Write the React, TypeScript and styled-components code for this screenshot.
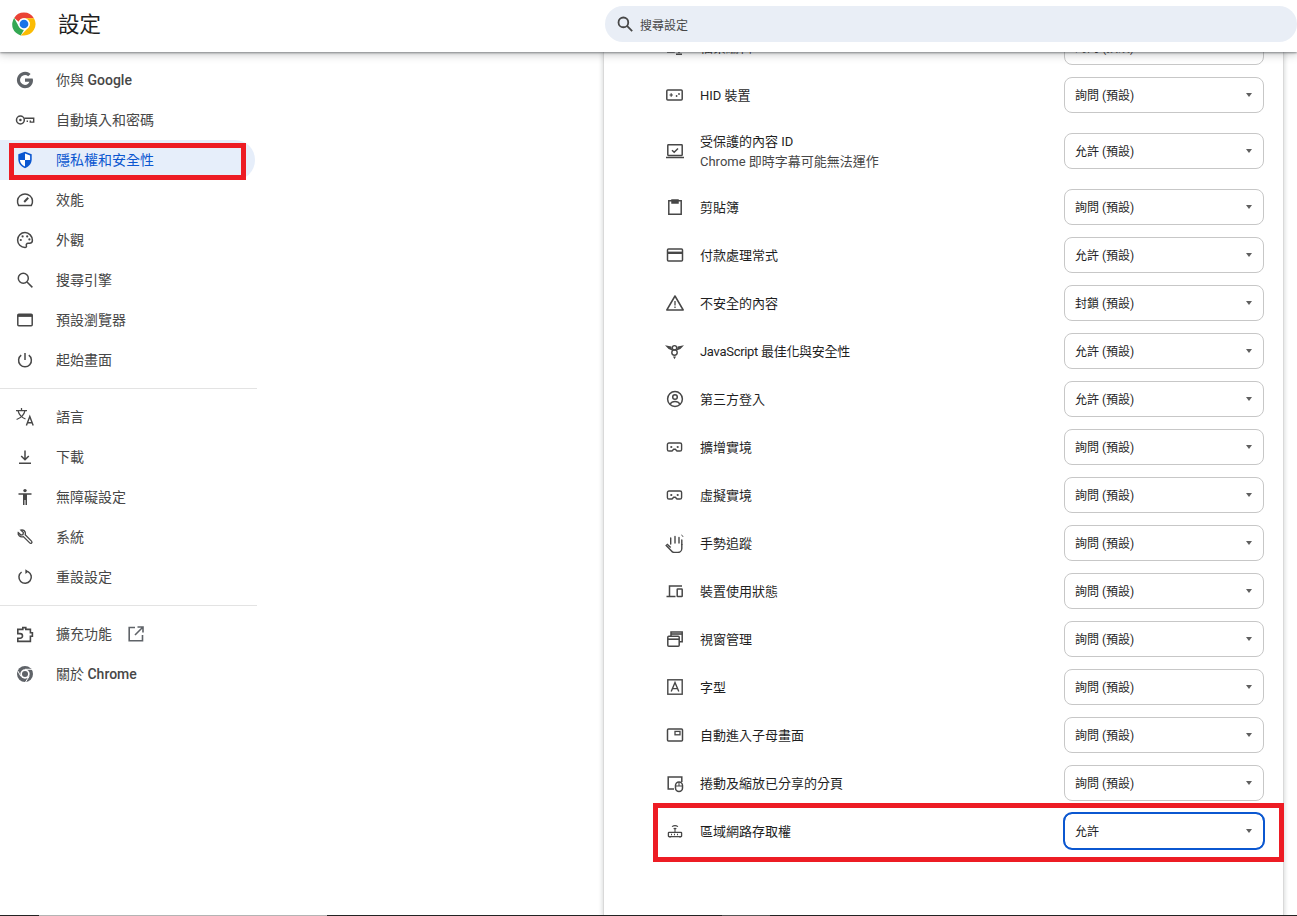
import React from "react";
import styled, { createGlobalStyle } from "styled-components";

const Global = createGlobalStyle`
  html, body { margin: 0; padding: 0; height: 100%; background: #fff; overflow: hidden; }
  * { box-sizing: border-box; }
  body { font-family: Roboto, "Noto Sans CJK TC", "Liberation Sans", sans-serif; font-size: 13px; color: #1f1f1f; }
`;

const Page = styled.div`
  position: relative;
  width: 1297px;
  height: 916px;
  display: flex;
  flex-direction: column;
  overflow: hidden;
`;

const Header = styled.header`
  flex: 0 0 52px;
  display: flex;
  align-items: center;
  padding-bottom: 4px;
  background: #fff;
  box-shadow: 0 1px 2px rgba(60, 64, 67, 0.55), 0 3px 8px rgba(60, 64, 67, 0.25);
  position: relative;
  z-index: 2;
`;

const Brand = styled.div`
  flex: 0 0 605px;
  display: flex;
  align-items: center;
  padding-left: 12px;
  gap: 22px;
`;

const Title = styled.h1`
  margin: 2px 0 0 0;
  font-size: 21.5px;
  font-weight: 400;
  line-height: 1;
  color: #1f1f1f;
`;

const SearchBox = styled.div`
  flex: 0 0 692px;
  height: 36px;
  border-radius: 18px;
  background: #e9eef6;
  display: flex;
  align-items: center;
  padding-left: 11px;
  gap: 6px;
  font-size: 12px;
  color: #474747;
`;

const Body = styled.div`
  flex: 1;
  min-height: 0;
  display: flex;
`;

const Sidebar = styled.nav`
  flex: 0 0 257px;
  padding-top: 8px;
`;

const NavRow = styled.div<{ $active?: boolean }>`
  width: 255px;
  height: 40px;
  display: flex;
  align-items: center;
  padding-left: 15px;
  border-radius: 0 20px 20px 0;
  color: ${(p) => (p.$active ? "#0b57d0" : "#474747")};
  background: ${(p) => (p.$active ? "#e6eefa" : "transparent")};
`;

const NavIcon = styled.span`
  flex: 0 0 20px;
  height: 20px;
  margin-right: 21px;
  display: flex;
`;

const NavText = styled.span`
  display: block;
  font-size: 14px;
  line-height: 20px;
  white-space: pre;
`;

const Latin = styled.span`
  font-weight: 500;
`;

const Divider = styled.hr`
  width: 257px;
  height: 1px;
  margin: 8px 0 8px;
  border: 0;
  background: #e3e3e3;
`;

const Gutter = styled.div`
  flex: 0 0 346px;
`;

const Card = styled.main`
  flex: 0 0 681px;
  background: #fff;
  border-left: 1px solid #d9d9d9;
  border-right: 1px solid #d9d9d9;
  box-shadow: -2px 0 3px rgba(60, 64, 67, 0.12), 2px 0 3px rgba(60, 64, 67, 0.12);
  overflow: hidden;
`;

const List = styled.div`
  margin-top: -29px;
  padding: 0 19px 0 61px;
`;

const Row = styled.div<{ $tall?: boolean }>`
  height: ${(p) => (p.$tall ? 64 : 48)}px;
  display: flex;
  align-items: center;
`;

const RowIcon = styled.span`
  flex: 0 0 20px;
  height: 20px;
  margin-right: 15px;
  display: flex;
  color: #474747;
`;

const RowLabel = styled.div<{ $tight?: boolean }>`
  flex: 1;
  min-width: 0;
  margin-top: 2px;
  line-height: 20px;
  color: #1f1f1f;
  letter-spacing: ${(p) => (p.$tight ? "-0.3px" : "normal")};
`;

const Sub = styled.div`
  color: #474747;
`;

const Select = styled.div<{ $focused?: boolean }>`
  flex: 0 0 200px;
  height: 36px;
  display: flex;
  align-items: center;
  justify-content: space-between;
  padding: 0 11px 0 10px;
  border: 1px solid #c7c7c7;
  border-radius: 8px;
  font-size: 12px;
  color: #1f1f1f;
  background: #fff;
  ${(p) => p.$focused && "outline: 2px solid #0b57d0; outline-offset: -1px; border-color: #0b57d0;"}
`;

const SelectText = styled.span`
  margin-top: -2px;
`;

const Caret = styled.span`
  width: 0;
  height: 0;
  border-left: 3.5px solid transparent;
  border-right: 3.5px solid transparent;
  border-top: 4px solid #5f5f5f;
`;

const RedBox = styled.div<{ $x: number; $y: number; $w: number; $h: number }>`
  position: absolute;
  left: ${(p) => p.$x}px;
  top: ${(p) => p.$y}px;
  width: ${(p) => p.$w}px;
  height: ${(p) => p.$h}px;
  border: 5px solid #ed1c24;
  z-index: 3;
  pointer-events: none;
`;

const TaskStrip = styled.div`
  position: absolute;
  left: 0;
  right: 0;
  bottom: 0;
  height: 1px;
  background: #232323;
  z-index: 4;
`;

const TaskGap = styled.span<{ $x: number; $w: number; $c: string }>`
  position: absolute;
  left: ${(p) => p.$x}px;
  width: ${(p) => p.$w}px;
  top: 0;
  height: 1px;
  background: ${(p) => p.$c};
`;

type IconProps = { children: React.ReactNode };
const Ico = ({ children }: IconProps) => (
  <svg width="20" height="20" viewBox="0 0 20 20" fill="none" stroke="currentColor" strokeWidth="1.5">
    {children}
  </svg>
);

const ChromeLogo = () => (
  <svg width="24" height="24" viewBox="2 2 44 44">
    <path fill="#ea4335" d="M24 3a21 21 0 0 1 18.2 10.5H24a10.5 10.5 0 0 0-9.7 6.4L6 12.9A21 21 0 0 1 24 3z" />
    <path fill="#34a853" d="M6 12.9l9 16.4A10.5 10.5 0 0 0 24 34.5L18 45A21 21 0 0 1 6 12.9z" />
    <path fill="#fbbc04" d="M42.2 13.5A21 21 0 0 1 24 45h-6l15-15.7A10.5 10.5 0 0 0 24 13.5z" />
    <circle cx="24" cy="24" r="10.5" fill="#fff" />
    <circle cx="24" cy="24" r="8" fill="#1a73e8" />
  </svg>
);

const GIcon = () => (
  <svg width="20" height="20" viewBox="0 0 20 20" fill="#5f6368">
    <path d="M17.6 8.4H10v3.3h4.4c-.6 2-2.3 3.2-4.4 3.2a4.9 4.9 0 1 1 3.2-8.6l2.4-2.4A8.2 8.2 0 1 0 10 18.2c4.7 0 8-3.3 8-8 0-.6-.1-1.2-.4-1.8z" />
  </svg>
);

const icons: Record<string, React.ReactNode> = {
  google: <GIcon />,
  key: (
    <Ico>
      <circle cx="5.4" cy="10" r="3.9" />
      <path d="M9.3 8.3h9.4v3.8h-3.4v-1.6M12.3 12.1v-1.6" strokeWidth="1.4" />
      <circle cx="5.4" cy="10" r="1.3" fill="currentColor" stroke="none" />
    </Ico>
  ),
  shield: (
    <svg width="20" height="20" viewBox="0 0 20 20">
      <path fill="#0b57d0" d="M10 1.8l6.7 2.5v5c0 4.2-2.8 7.6-6.7 8.9-3.9-1.3-6.7-4.7-6.7-8.9v-5z" />
      <path fill="#fff" d="M10 3.5l5.1 1.9v4.5H10zM10 9.9v6.6c-2.7-1.1-4.8-3.4-5.1-6.6z" />
    </svg>
  ),
  gauge: (
    <Ico>
      <path d="M3.7 15.5A7.5 7.5 0 1 1 16.3 15.5z" />
      <path d="M9.2 12l4-4.2" strokeWidth="2" />
    </Ico>
  ),
  palette: (
    <Ico>
      <path d="M10 2.6a7.4 7.4 0 0 0 0 14.8c1.3 0 1.7-.9 1.4-1.7-.5-1.2.2-2.4 1.6-2.4h1.6c1.6 0 2.8-1.1 2.8-3 0-4.2-3.4-7.7-7.4-7.7z" />
      <g fill="currentColor" stroke="none">
        <circle cx="5.8" cy="10" r="1.1" />
        <circle cx="7.6" cy="6.4" r="1.1" />
        <circle cx="12.2" cy="6.4" r="1.1" />
        <circle cx="14.4" cy="9.4" r="1.1" />
      </g>
    </Ico>
  ),
  search: (
    <Ico>
      <circle cx="8.3" cy="8.3" r="5" />
      <path d="M12 12l5.4 5.4" />
    </Ico>
  ),
  browser: (
    <Ico>
      <rect x="2.8" y="4.2" width="14.4" height="11.6" rx="1" />
      <path d="M2.8 5.6h14.4" strokeWidth="2.6" />
    </Ico>
  ),
  power: (
    <Ico>
      <path d="M10 3v7" />
      <path d="M6.2 5.2a6.4 6.4 0 1 0 7.6 0" />
    </Ico>
  ),
  lang: (
    <Ico>
      <path d="M1 3.6h11M6.5 1v2.6M3 3.7c1 4 3.8 7 7.5 8.3M10 3.7c-.9 4-3.8 7.2-8.4 8.8" strokeWidth="1.25" />
      <path d="M11.4 18.6l3.4-9 3.4 9M12.6 15.8h4.6" strokeWidth="1.4" />
    </Ico>
  ),
  download: (
    <Ico>
      <path d="M10 3.5v9M6.2 9l3.8 3.8L13.8 9M4 16.2h12" />
    </Ico>
  ),
  a11y: (
    <svg width="20" height="20" viewBox="0 0 20 20" fill="currentColor">
      <circle cx="10" cy="3.6" r="1.7" />
      <path d="M3.5 6.2h13v1.5H12V18h-1.5v-5h-1v5H8V7.7H3.5z" />
    </svg>
  ),
  wrench: (
    <Ico>
      <path d="M3.2 5.6l2.7 2.5 2-.5.5-2L5.8 3c2.4-.8 4.9 1.2 4.6 3.8l-.2 1 6.3 6.3c.6.6.6 1.4.1 1.9s-1.3.5-1.9-.1l-6.3-6.3-1 .2C5 10.1 2.6 8 3.2 5.6z" strokeWidth="1.3" />
    </Ico>
  ),
  reset: (
    <Ico>
      <path d="M6.6 5A6.2 6.2 0 1 0 13 4.6" />
      <path d="M10.4 2.2L13.6 4.6 10.4 7z" fill="currentColor" stroke="none" />
    </Ico>
  ),
  puzzle: (
    <Ico>
      <path d="M2.8 5.4h5V3.6h3v1.8h4.6v3.4h2v3.4h-2v5.2H2.8v-3.2h2.4a2.3 2.3 0 0 0 0-4.6H2.8z" strokeWidth="1.6" />
    </Ico>
  ),
  chrome: (
    <svg width="20" height="20" viewBox="0 0 20 20" fill="#5f6368">
      <circle cx="10" cy="10" r="8" />
      <circle cx="10" cy="10" r="4.7" fill="#fff" />
      <circle cx="10" cy="10" r="3" />
      <path fill="none" stroke="#fff" strokeWidth="1" d="M10 5.3h7.4M5.9 12.4L2.6 6.6M14.1 12.4l-3.9 6.2" />
    </svg>
  ),
  fileSave: (
    <Ico>
      <path d="M2.8 11V4h14.4v7M2.8 11v4h7" />
      <path d="M14 9v6M11.5 12.8L14 15.3l2.5-2.5M11 17.2h6" />
    </Ico>
  ),
  hid: (
    <Ico>
      <rect x="1.8" y="5" width="15.4" height="10" rx="1" />
      <path d="M4.5 10h3.4M6.2 8.3v3.4" strokeWidth="1.2" />
      <circle cx="11.6" cy="11" r=".9" fill="currentColor" stroke="none" />
      <circle cx="14" cy="9" r=".9" fill="currentColor" stroke="none" />
    </Ico>
  ),
  laptopCheck: (
    <Ico>
      <rect x="2.8" y="3.8" width="14.4" height="10.6" rx=".6" />
      <path d="M1 16.5h18" />
      <path d="M7 9.2l2.2 2.1L13 7.5" />
    </Ico>
  ),
  clipboard: (
    <Ico>
      <path d="M7 3.8H3.8v13.4h12.4V3.8H13" />
      <path d="M7 3h6v3H7z" fill="currentColor" />
    </Ico>
  ),
  card: (
    <Ico>
      <rect x="2.5" y="4" width="15" height="12" rx="1" />
      <path d="M2.5 7.8h15" strokeWidth="2.4" />
    </Ico>
  ),
  warn: (
    <Ico>
      <path d="M10 3L1.8 17h16.4z" strokeLinejoin="round" />
      <path d="M10 8v4.6M10 13.6v1.5" strokeWidth="1.3" />
    </Ico>
  ),
  v8: (
    <svg width="20" height="20" viewBox="0 0 20 20" fill="currentColor">
      <path d="M0 4.2l6.4 1.2.8 4.2-3.6-1.6zM19 4.2l-6.4 1.2-.8 4.2 3.6-1.6z" />
      <circle cx="9.5" cy="6.8" r="2.2" fill="none" stroke="currentColor" strokeWidth="1.4" />
      <circle cx="9.5" cy="11.6" r="2.7" fill="none" stroke="currentColor" strokeWidth="1.4" />
      <path d="M8 15.6h3L9.5 18.2z" />
    </svg>
  ),
  person: (
    <Ico>
      <circle cx="10" cy="10" r="7.4" />
      <circle cx="10" cy="8" r="2.3" />
      <path d="M5.2 15c.9-1.7 2.8-2.6 4.8-2.6s3.9.9 4.8 2.6" />
    </Ico>
  ),
  vr: (
    <Ico>
      <path d="M4 6h11a1.6 1.6 0 0 1 1.6 1.6v4.8A1.6 1.6 0 0 1 15 14h-3l-1.7-1.8H8.7L7 14H4a1.6 1.6 0 0 1-1.6-1.6V7.6A1.6 1.6 0 0 1 4 6z" strokeWidth="1.4" />
      <circle cx="6.3" cy="10" r="1.1" fill="currentColor" stroke="none" />
      <circle cx="12.7" cy="10" r="1.1" fill="currentColor" stroke="none" />
    </Ico>
  ),
  hand: (
    <Ico>
      <path d="M5.7 11V5M10 10V3.5M14 10V4.5M16.8 11.5V7" strokeWidth="1.4" strokeLinecap="round" />
      <path d="M16.8 11v4.5a4 4 0 0 1-4 4H9.5c-1.3 0-2.3-.5-3-1.5L1.2 12.6l1.2-1.1 3.3 3" strokeWidth="1.4" />
      <path d="M16.4 2c.8.3 1.4.9 1.6 1.8" strokeWidth="1" />
    </Ico>
  ),
  devices: (
    <Ico>
      <path d="M4.5 15.5V5H17M1.5 15.5h9" />
      <rect x="12.2" y="8" width="5" height="7.6" rx=".6" />
    </Ico>
  ),
  windows: (
    <Ico>
      <rect x="2.8" y="7.2" width="11.4" height="10" rx="1" />
      <path d="M2.8 10.2h11.4" strokeWidth="1.6" />
      <path d="M6 7V3h11.2v9.8h-3" />
      <path d="M6 5h11.2" strokeWidth="1.6" />
    </Ico>
  ),
  font: (
    <svg width="20" height="20" viewBox="0 0 20 20" fill="none" stroke="currentColor">
      <rect x="2.8" y="2.8" width="14.4" height="14.4" strokeWidth="1.4" />
      <path d="M6.2 14.5L10 5.5l3.8 9M7.4 11.6h5.2" strokeWidth="1.4" />
    </svg>
  ),
  pip: (
    <Ico>
      <rect x="2.5" y="4" width="15" height="12" rx="1" />
      <rect x="10" y="6.4" width="5" height="3.4" strokeWidth="1.3" />
    </Ico>
  ),
  scroll: (
    <Ico>
      <path d="M9 16H3.2V4h13.6v5" />
      <rect x="10.5" y="9" width="7" height="9.4" rx="3.5" />
      <path d="M14 9v4M10.5 13h7" strokeWidth="1.1" />
    </Ico>
  ),
  router: (
    <Ico>
      <rect x="3.4" y="11.4" width="13.2" height="4.2" rx=".6" strokeWidth="1.3" />
      <path d="M10 11V7M7 5.6c1.8-1.2 4.2-1.2 6 0M8.6 7.8c.9-.5 1.9-.5 2.8 0" strokeWidth="1.1" />
      <path d="M6 13.5h1M9 13.5h1M12 13.5h1" strokeWidth="1.3" />
      <path d="M5 15.8v1M15 15.8v1" strokeWidth="1" />
    </Ico>
  ),
};

const ExtLink = styled.span`
  display: inline-flex;
  margin-left: 14px;
  color: #5f6368;
`;

type NavItem = { icon: string; label: React.ReactNode; active?: boolean; ext?: boolean };

const navA: NavItem[] = [
  { icon: "google", label: <>你與 <Latin>Google</Latin></> },
  { icon: "key", label: "自動填入和密碼" },
  { icon: "shield", label: "隱私權和安全性", active: true },
  { icon: "gauge", label: "效能" },
  { icon: "palette", label: "外觀" },
  { icon: "search", label: "搜尋引擎" },
  { icon: "browser", label: "預設瀏覽器" },
  { icon: "power", label: "起始畫面" },
];
const navB: NavItem[] = [
  { icon: "lang", label: "語言" },
  { icon: "download", label: "下載" },
  { icon: "a11y", label: "無障礙設定" },
  { icon: "wrench", label: "系統" },
  { icon: "reset", label: "重設設定" },
];
const navC: NavItem[] = [
  { icon: "puzzle", label: "擴充功能", ext: true },
  { icon: "chrome", label: <>關於 <Latin>Chrome</Latin></> },
];

type RowItem = { icon: string; label: string; sub?: string; value: string; focused?: boolean; tight?: boolean };

const ASK = "詢問 (預設)";
const ALLOW = "允許 (預設)";

const rows: RowItem[] = [
  { icon: "fileSave", label: "檔案編輯", value: ASK },
  { icon: "hid", label: "HID 裝置", value: ASK },
  { icon: "laptopCheck", label: "受保護的內容 ID", sub: "Chrome 即時字幕可能無法運作", value: ALLOW },
  { icon: "clipboard", label: "剪貼簿", value: ASK },
  { icon: "card", label: "付款處理常式", value: ALLOW },
  { icon: "warn", label: "不安全的內容", value: "封鎖 (預設)" },
  { icon: "v8", label: "JavaScript 最佳化與安全性", value: ALLOW, tight: true },
  { icon: "person", label: "第三方登入", value: ALLOW },
  { icon: "vr", label: "擴增實境", value: ASK },
  { icon: "vr", label: "虛擬實境", value: ASK },
  { icon: "hand", label: "手勢追蹤", value: ASK },
  { icon: "devices", label: "裝置使用狀態", value: ASK },
  { icon: "windows", label: "視窗管理", value: ASK },
  { icon: "font", label: "字型", value: ASK },
  { icon: "pip", label: "自動進入子母畫面", value: ASK },
  { icon: "scroll", label: "捲動及縮放已分享的分頁", value: ASK },
  { icon: "router", label: "區域網路存取權", value: "允許", focused: true },
];

const renderNav = (items: NavItem[]) =>
  items.map((n, i) => (
    <NavRow key={i} $active={n.active}>
      <NavIcon>{icons[n.icon]}</NavIcon>
      <NavText>{n.label}</NavText>
      {n.ext && (
        <ExtLink>
          <svg width="20" height="20" viewBox="0 0 20 20" fill="none" stroke="currentColor" strokeWidth="1.6">
            <path d="M9 3.5H3.2v13.3h13.3V11M11.5 3h5.5v5.5M17 3L9 11" />
          </svg>
        </ExtLink>
      )}
    </NavRow>
  ));

export default function App() {
  return (
    <Page>
      <Global />
      <Header>
        <Brand>
          <ChromeLogo />
          <Title>設定</Title>
        </Brand>
        <SearchBox>
          <svg width="18" height="18" viewBox="0 0 20 20" fill="none" stroke="#474747" strokeWidth="2">
            <circle cx="8.2" cy="8.2" r="5.4" />
            <path d="M12.2 12.2L18 18" />
          </svg>
          搜尋設定
        </SearchBox>
      </Header>
      <Body>
        <Sidebar>
          {renderNav(navA)}
          <Divider />
          {renderNav(navB)}
          <Divider />
          {renderNav(navC)}
        </Sidebar>
        <Gutter />
        <Card>
          <List>
            {rows.map((r, i) => (
              <Row key={i} $tall={!!r.sub}>
                <RowIcon>{icons[r.icon]}</RowIcon>
                <RowLabel $tight={r.tight}>
                  {r.label}
                  {r.sub && <Sub>{r.sub}</Sub>}
                </RowLabel>
                <Select $focused={r.focused}>
                  <SelectText>{r.value}</SelectText>
                  <Caret />
                </Select>
              </Row>
            ))}
          </List>
        </Card>
      </Body>
      <RedBox $x={9} $y={143} $w={237} $h={37} />
      <RedBox $x={653} $y={803} $w={631} $h={59} />
      <TaskStrip>
        <TaskGap $x={39} $w={288} $c="#b4b4b4" />
        <TaskGap $x={722} $w={48} $c="#555555" />
      </TaskStrip>
    </Page>
  );
}
